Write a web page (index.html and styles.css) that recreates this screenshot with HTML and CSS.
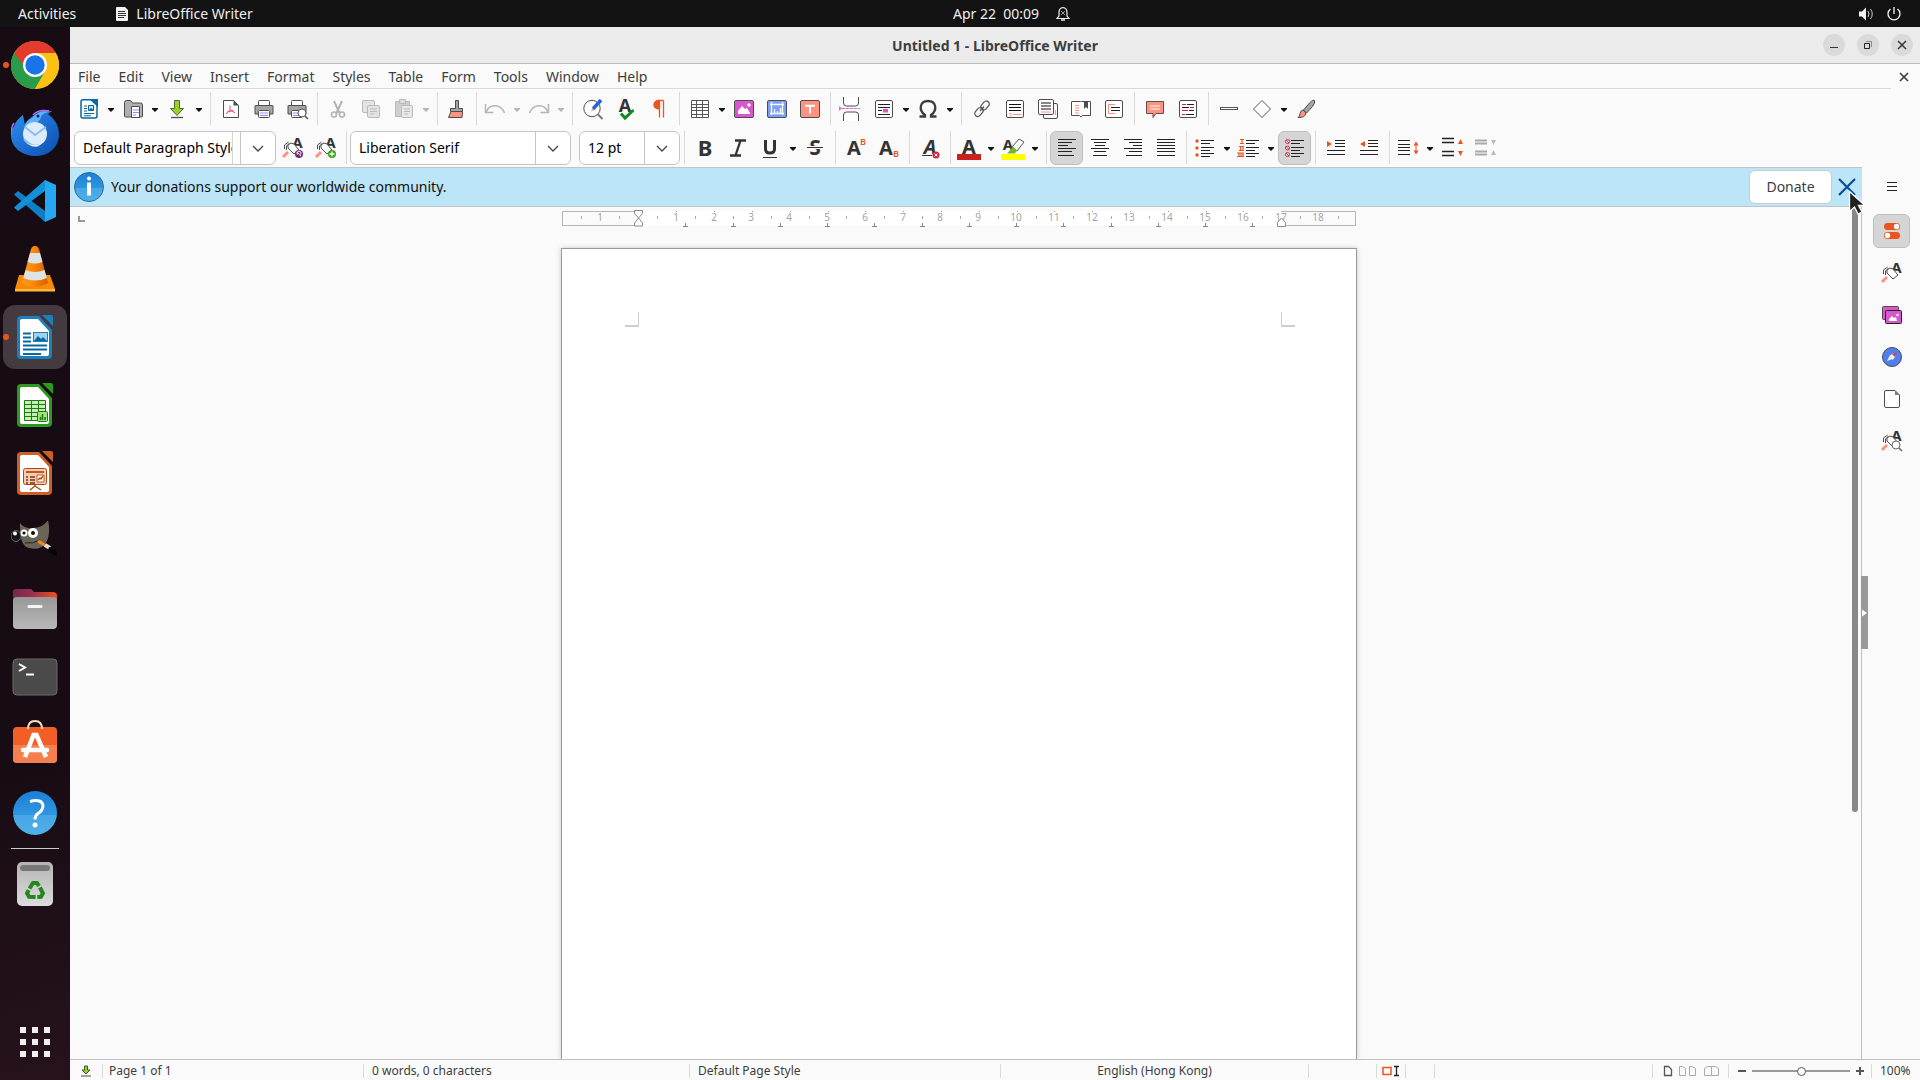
FILE: index.html
```html
<!DOCTYPE html>
<html lang="en">
<head>
<meta charset="utf-8">
<title>Untitled 1 - LibreOffice Writer</title>
<link rel="stylesheet" href="styles.css">
</head>
<body>
<svg class="defs" width="0" height="0" aria-hidden="true">
  <defs>
    <linearGradient id="g-blue" x1="0" y1="0" x2="0" y2="1"><stop offset="0" stop-color="#1b7fd6"/><stop offset=".54" stop-color="#2e96e0"/><stop offset=".55" stop-color="#46a6e6"/><stop offset="1" stop-color="#4eb0ea"/></linearGradient>
    <linearGradient id="g-cone" x1="0" y1="0" x2="1" y2="0"><stop offset="0" stop-color="#f99a1c"/><stop offset=".4" stop-color="#ff8a0c"/><stop offset="1" stop-color="#d85c00"/></linearGradient>
    <linearGradient id="g-folder" x1="0" y1="0" x2="1" y2="0"><stop offset="0" stop-color="#77284f"/><stop offset=".45" stop-color="#9b3050"/><stop offset="1" stop-color="#f0501c"/></linearGradient>
    <linearGradient id="g-grey" x1="0" y1="0" x2="0" y2="1"><stop offset="0" stop-color="#989898"/><stop offset="1" stop-color="#b8b8b8"/></linearGradient>
    <linearGradient id="g-bin" x1="0" y1="0" x2="0" y2="1"><stop offset="0" stop-color="#b4b4b4"/><stop offset="1" stop-color="#dcdcdc"/></linearGradient>
    <linearGradient id="g-bird" x1="0" y1="0" x2="1" y2="1"><stop offset="0" stop-color="#2f8ff5"/><stop offset="1" stop-color="#0b4fae"/></linearGradient>
  </defs>
</svg>
<svg class="symbols" aria-hidden="true">
  <symbol id="i-caret" viewBox="0 0 8 24"><path d="M1 11h6v1l-3 3-3-3z" fill="currentColor"/></symbol>
  <symbol id="i-chev" viewBox="0 0 12 12"><path d="M1 4l5 5 5-5" fill="none" stroke="#444" stroke-width="1.3"/></symbol>
  <symbol id="i-new" viewBox="0 0 24 24"><path d="M6 2.700h9l5 5V19q0 2-2 2H6q-2 0-2-2V4.700q0-2 2-2z" fill="#fff" stroke="#0369a3" stroke-width="1.500"/><path d="M12 2h9v8z" fill="#0369a3"/><path d="M7 9h3M7 11.500h3M7 14h3M7 16.500h10M7 18.800h7" stroke="#0369a3"/><path d="M11.500 8.500h5v5h-5z" fill="#bde3f5" stroke="#0369a3"/><path d="M12 13l2-2 3 2.500z" fill="#0369a3"/></symbol>
  <symbol id="i-open" viewBox="0 0 24 24"><path d="M3.500 19V5.500q0-2 2-2h4l2 2.500h8q2 0 2 2V19q0 1-1 1h-16q-1 0-1-1z" fill="#b0b0b0" stroke="#4d4d4d"/><path d="M10.500 9.500h8v11h-8z" fill="#fff" stroke="#4d4d4d"/><path d="M12 13h6M12 15.500h6M12 18h3" stroke="#8d8df0"/></symbol>
  <symbol id="i-save" viewBox="0 0 24 24"><path d="M9.500 3.500h5v8h4L12 18.500 5.500 11.500h4z" fill="#9acd32" stroke="#4d6a2a"/><path d="M6 20.500h12" stroke="#4d4d4d" stroke-width="1.300"/></symbol>
  <symbol id="i-pdf" viewBox="0 0 24 24"><path d="M4.500 3.500h10l5 5v12h-15z" fill="#fff" stroke="#4d4d4d" stroke-linejoin="round"/><path d="M14.500 3v5.500H20z" fill="#4d4d4d"/><path d="M11 8.500v4l5 3.500M11 12.500L7 17M8.500 15l6-1.500" stroke="#e8486e" fill="none"/></symbol>
  <symbol id="i-print" viewBox="0 0 24 24"><rect x="6.500" y="3.500" width="11" height="6" rx="1" fill="#fff" stroke="#4d4d4d"/><path d="M3.500 8.500h17q.500 0 .500.500v8H3V9q0-.5.5-.5z" fill="#a5a5a5" stroke="#4d4d4d"/><rect x="6.500" y="13.500" width="11" height="7" rx="1" fill="#fff" stroke="#4d4d4d"/><path d="M8 16h8M8 18.500h8" stroke="#8d8df0"/></symbol>
  <symbol id="i-cut" viewBox="0 0 24 24" stroke="#b3b3b3" fill="none"><path d="M8 4l5.500 12M16 4l-5.500 12" stroke-width="2"/><circle cx="8" cy="17.500" r="2.500" stroke-width="1.600"/><circle cx="16" cy="17.500" r="2.500" stroke-width="1.600"/></symbol>
  <symbol id="i-copy" viewBox="0 0 24 24" stroke="#b9b9b9" fill="#e3e3e3"><rect x="3.500" y="3.500" width="12" height="12" rx="1.500"/><rect x="8.500" y="8.500" width="12" height="12" rx="1.500"/><path d="M11 12h7M11 14.500h7M11 17h4"/></symbol>
  <symbol id="i-paste" viewBox="0 0 24 24" stroke="#b9b9b9"><path d="M3.500 4.500h14v15h-14z" fill="#cfcfcf"/><path d="M7.500 2.500h6v4h-6z" fill="#ddd"/><rect x="9.500" y="8.500" width="11" height="12" rx="1" fill="#e8e8e8"/><path d="M12 12h6M12 14.500h6M12 17h4"/></symbol>
  <symbol id="i-clone" viewBox="0 0 24 24"><path d="M11.500 3.500h3v8h4v3h-12v-3h5z" fill="#a5a5a5" stroke="#4d4d4d"/><path d="M7 14.500h11.500l-.5 6H4.500z" fill="#ff9280" stroke="#4d4d4d"/></symbol>
  <symbol id="i-undo" viewBox="0 0 24 24"><path d="M2.500 7v8.500h8M3.500 14.500C7 6 18 7 21.500 16" fill="none" stroke="#b5b5b5" stroke-width="1.500"/></symbol>
  <symbol id="i-find" viewBox="0 0 24 24"><circle cx="11" cy="11.500" r="8.200" fill="#fff" stroke="#4d4d4d"/><path d="M16.500 17l5 5" stroke="#777" stroke-width="2"/><path d="M12 12l8-9" stroke="#2a62de" stroke-width="3.500"/><path d="M10 14.500l1.200-3 2 1.800z" fill="#f5a76c"/></symbol>
  <symbol id="i-spell" viewBox="0 0 24 24"><text x="11" y="15" text-anchor="middle" class="glyph" font-size="18">A</text><path d="M7 16.500l4 4.500 8.500-8" stroke="#128a1f" stroke-width="3" fill="none"/></symbol>
  <symbol id="i-pil" viewBox="0 0 24 24"><path d="M16.500 3.500H11M12.500 3.500v17M16.500 3.500v17" fill="none" stroke="#e95420" stroke-width="1.300"/><path d="M12.500 3H11a4.700 4.700 0 0 0 0 9.400h1.500z" fill="#e95420"/></symbol>
  <symbol id="i-table" viewBox="0 0 24 24"><path d="M3.500 3.500h17v17h-17zM3.500 7.500h17M3.500 10.500h17M3.500 13.500h17M3.500 17.500h17M8.500 3.500v17M14.500 3.500v17" fill="#fff" stroke="#555"/></symbol>
  <symbol id="i-image" viewBox="0 0 24 24"><rect x="2.500" y="3.500" width="19" height="17" rx="1.500" fill="#d957cc" stroke="#4d4d4d"/><path d="M6 17v-3l4-5 3 3 2-1 3 5v1z" fill="#fff"/><circle cx="17" cy="8" r="1.700" fill="#fff"/></symbol>
  <symbol id="i-chart" viewBox="0 0 24 24"><rect x="2.500" y="3.500" width="19" height="17" rx="1.500" fill="#7ba0f8" stroke="#4d4d4d"/><path d="M6.500 5v13M17.500 5v13M5 7.500h14M5 16.500h14M9.500 12v5M12.500 14v3M15.500 11v6" stroke="#fff" stroke-width="1.300"/></symbol>
  <symbol id="i-tbox" viewBox="0 0 24 24"><rect x="2.500" y="3.500" width="19" height="17" rx="1.500" fill="#ff9280" stroke="#4d4d4d"/><path d="M7 8.800h10M12 8v8.500" stroke="#fff" stroke-width="2"/></symbol>
  <symbol id="i-break" viewBox="0 0 24 24"><path d="M4.500 0v6q0 3 3 3h9q3 0 3-3V0M4.500 24v-6q0-3 3-3h9q3 0 3 3v6" fill="#fff" stroke="#4d4d4d"/><path d="M3 11.500h18" stroke="#e26bd0" stroke-dasharray="3 1"/><path d="M0 9l3 2.500L0 14z" fill="#e26bd0"/></symbol>
  <symbol id="i-field" viewBox="0 0 24 24"><rect x="3.500" y="3.500" width="17" height="17" rx="1.500" fill="#fff" stroke="#4d4d4d"/><path d="M6 7.500h12M6 10.500h12M6 13.500h4M6 17.500h12" stroke="#222"/><path d="M11 12h5v3.500h-5z" fill="#d957cc"/></symbol>
  <symbol id="i-omega" viewBox="0 0 24 24"><path d="M3.500 19.500h5.500v-1.500C2 13 4 4 12 4s10 9 3 14v1.500h5.500" fill="none" stroke="#3d3d3d" stroke-width="2.300"/></symbol>
  <symbol id="i-link" viewBox="0 0 24 24" fill="none" stroke="#555" stroke-width="1.200"><rect x="-5" y="-3" width="10" height="6" rx="3" transform="translate(15 8.500) rotate(-50)"/><rect x="-5" y="-3" width="10" height="6" rx="3" transform="translate(9 15) rotate(-50)"/><path d="M10 14l4-4.500"/></symbol>
  <symbol id="i-foot" viewBox="0 0 24 24"><rect x="3.500" y="3.500" width="17" height="17" rx="1.500" fill="#fff" stroke="#4d4d4d"/><path d="M6 7.500h12M6 10.500h12M6 13.500h12" stroke="#111" stroke-width="1.200"/><path d="M6 16.500h2v3M10 17.500h8" stroke="#ff9280" fill="none"/></symbol>
  <symbol id="i-end" viewBox="0 0 24 24"><rect x="7.500" y="6.500" width="14" height="15" rx="1.500" fill="#fff" stroke="#4d4d4d"/><path d="M19.500 13v5" stroke="#ff9280"/><rect x="2.500" y="2.500" width="15" height="15" rx="1.500" fill="#fff" stroke="#4d4d4d"/><path d="M5 6h10M5 9h10M5 12h10" stroke="#111"/><path d="M5 15h10" stroke="#ff9280"/></symbol>
  <symbol id="i-book" viewBox="0 0 24 24"><path d="M3 4.500h8.500l.5.500.5-.5H21q.5 0 .5.500v13.500H13.500L12 20l-1.500-1.500h-8V5q0-.5.5-.5z" fill="#fff" stroke="#4d4d4d"/><path d="M15 4h4v8l-2-2-2 2z" fill="#4d4d4d"/><path d="M6 8.500h4M6 11h4M6 13.500h4M6 16h4" stroke="#ff9280" stroke-width="1.200"/></symbol>
  <symbol id="i-xref" viewBox="0 0 24 24"><rect x="3.500" y="3.500" width="17" height="17" rx="1.500" fill="#fff" stroke="#4d4d4d"/><path d="M13 7.500H6.500v9H13" stroke="#ff9280" fill="none"/><path d="M9 10.500h9M9 13.500h9" stroke="#222"/></symbol>
  <symbol id="i-comment" viewBox="0 0 24 24"><path d="M3.500 4.500h17v12H13l-3 4v-4H3.500z" fill="#ff9280" stroke="#6d4a45"/><path d="M7 9h10M7 12h10" stroke="#fff"/></symbol>
  <symbol id="i-track" viewBox="0 0 24 24"><rect x="3.500" y="3.500" width="17" height="17" rx="1.500" fill="#fff" stroke="#4d4d4d"/><path d="M6 7.500h4M14 10.500h4M6 13.500h6M6 17.500h3" stroke="#d4213d"/><path d="M11 7.500h7M6 10.500h7M13 13.500h5M10 17.500h8" stroke="#222"/></symbol>
  <symbol id="i-line" viewBox="0 0 24 24"><rect x="3.500" y="10.500" width="17" height="2" fill="#fff" stroke="#555"/></symbol>
  <symbol id="i-diamond" viewBox="0 0 24 24"><path d="M12 3.500l8.500 8.500-8.500 8.500L3.500 12z" fill="#fff" stroke="#555"/></symbol>
  <symbol id="i-brush" viewBox="0 0 24 24"><path d="M20.500 3.500q1 2-2 6l-6 6.500-3-3L15.500 6q4-4 5-2.500z" fill="#a5a5a5" stroke="#4d4d4d"/><path d="M9 13l3 3q-1 5-8 4.500 2-1 2-4 .5-3 3-3.500z" fill="#ff9280" stroke="#4d4d4d"/></symbol>
  <symbol id="i-styleA" viewBox="0 0 24 24"><text x="16.500" y="12" text-anchor="middle" class="glyph" font-size="15">A</text><path d="M2 21l5-5" stroke="#ff9280" stroke-width="3"/><path d="M7 9l3-2 3 1 5 6-5 4-6-6z" fill="#fff" stroke="#4d4d4d"/><path d="M3.500 13V9l4-3M5.500 14v-4l3-3" stroke="#4d4d4d" fill="none"/></symbol>
  <symbol id="i-bul" viewBox="0 0 24 24"><path d="M8 4.500h13M8 7.500h9M8 11.500h13M8 14.500h9M8 17.500h13M8 20.500h9" stroke="#222"/></symbol>
  <symbol id="i-app-doc" viewBox="0 0 40 48"><path d="M6 3h18l13 14v25q0 4-4 4H6q-4 0-4-4V7q0-4 4-4z" fill="currentColor"/><path d="M7 6h16l11 12v23q0 2-2 2H7q-2 0-2-2V8q0-2 2-2z" fill="#fff"/><path d="M27 2h9q2 0 2 2v9z" fill="currentColor"/></symbol>
</svg>

<div class="desktop">
  <header class="topbar">
    <div class="top-left">
      <button class="top-item">Activities</button>
      <button class="top-item app"><svg width="12" height="14" viewBox="0 0 12 14"><path d="M1 0h8l3 3v10q0 1-1 1H1q-1 0-1-1V1q0-1 1-1z" fill="#f2f2f2"/><path d="M2 4.500h7M2 6.500h8M2 8.500h8M2 10.500h6" stroke="#333"/></svg>LibreOffice Writer</button>
    </div>
    <button class="top-item clock">Apr 22&nbsp; 00:09<svg width="16" height="16" viewBox="0 0 16 16"><path d="M8 1.500q4 .5 4 5V10l2 2.500H2L4 10V6.500q0-4.500 4-5z" fill="none" stroke="#eee" stroke-width="1.200"/><path d="M6 14h4" stroke="#eee" stroke-width="1.500"/><path d="M6 5l4 4M10 5L6 9" stroke="#999"/></svg></button>
    <button class="top-item tray" aria-label="System"><svg width="16" height="16" viewBox="0 0 16 16"><path d="M1 5.500h3L8 1.500v13L4 10.500H1z" fill="#f2f2f2"/><path d="M10 5q2 3 0 6M12.500 3q3.500 5 0 10" stroke="#ccc" fill="none"/></svg><svg width="16" height="16" viewBox="0 0 16 16"><path d="M4.500 3a6 6 0 1 0 7 0M8 1v7" stroke="#f2f2f2" stroke-width="1.300" fill="none"/></svg></button>
  </header>

  <nav class="dock" aria-label="Dock">
    <button class="dock-item running" aria-label="Chrome"><svg width="48" height="48" viewBox="0 0 48 48"><circle cx="24" cy="24" r="24" fill="#fbbc04"/><path d="M24 24L3.200 12a24 24 0 0 1 41.600 0z" fill="#e33b2e"/><path d="M3.200 12A24 24 0 0 0 24 48l10.400-18L24 24z" fill="#2a9b48"/><path d="M24 12h20.800A24 24 0 0 1 24 48l10.400-18z" fill="#fcc115"/><path d="M3.200 12L13.600 30l10.400-6-2-10z" fill="#2a9b48"/><path d="M3.200 12H24l-10 14z" fill="#e33b2e"/><circle cx="24" cy="24" r="12" fill="#fff"/><circle cx="24" cy="24" r="9.700" fill="#1a73e8"/></svg></button>
    <button class="dock-item" aria-label="Thunderbird"><svg width="48" height="48" viewBox="0 0 48 48"><path d="M24 6q5-6 17-4l-4 3q11 8 11 20c0 13-10 22-23 22S0 39 0 26q0-6 3-9 3-7 9-11l2 10q2-6 10-10z" fill="url(#g-bird)"/><path d="M21 9q7-9 17-6-7 1-8 5-1 5-8 7-6 3-7 8-5-8 6-14z" fill="#5fb0fa"/><path d="M22 6q5-6 16-4M3 14q-3 4-3 12" stroke="#b06af0" fill="none" stroke-width="1.500"/><circle cx="24" cy="25" r="12" fill="#dcecfb"/><path d="M14 18l10 8 11-8M13 30q8 9 15 6" stroke="#8fbdf0" fill="none" stroke-width="2"/><path d="M12 32q8 6 18 3-6 6-18-3z" fill="#eef6ff"/><circle cx="27" cy="7" r="1.500" fill="#06224f"/></svg></button>
    <button class="dock-item" aria-label="Visual Studio Code"><svg width="42" height="42" viewBox="0 0 42 42"><path d="M0 14.500l4-3.500L35 34l-4 8z" fill="#0e7fc4"/><path d="M0 27.500l4 3.500L35 8 31 0z" fill="#1391d8"/><path d="M31 0l11 5v32l-11 5z" fill="#25a7f2"/></svg></button>
    <button class="dock-item" aria-label="VLC"><svg width="42" height="48" viewBox="0 0 42 48"><path d="M5 30h31l5 14v2H1v-2z" fill="#f88a08"/><path d="M1 44h40v2.500H1z" fill="#ffb83a"/><path d="M21 1q3 0 4 3l9 34q-13 8-26 0l9-34q1-3 4-3z" fill="url(#g-cone)"/><path d="M16 8h10l2.500 9q-7.500 3-15 0zM11.500 25q9 4 19 0l2.300 8q-11.500 5-23.500 0z" fill="#dce3e3"/></svg></button>
    <button class="dock-item running active" aria-label="LibreOffice Writer"><svg class="c-writer" width="40" height="48" viewBox="0 0 40 48"><use href="#i-app-doc"/><path d="M8 20.500h8M8 24.500h8M8 28.500h8M8 32.500h24M8 36.500h24M8 41h18" stroke="#0369a3" stroke-width="2"/><rect x="18.500" y="19.500" width="14" height="9" fill="#9fd3ef" stroke="#1b7fc0"/><path d="M19 28l4-5 3 3 2-2 4 4z" fill="#0369a3"/></svg></button>
    <button class="dock-item" aria-label="LibreOffice Calc"><svg class="c-calc" width="40" height="48" viewBox="0 0 40 48"><use href="#i-app-doc"/><path d="M9.500 19.500h21v20h-21zM9.500 23.500h21M9.500 27.500h21M9.500 31.500h21M9.500 35.500h21M16.500 19.500v20M23.500 19.500v20" fill="#c5efb5" stroke="#1d7a12"/><rect x="22.500" y="30.500" width="10" height="10" rx="1" fill="#9de27c" stroke="#1d7a12"/><path d="M25.500 39v-3M27.500 39v-6M30 39v-3" stroke="#1d7a12" stroke-width="1.500"/></svg></button>
    <button class="dock-item" aria-label="LibreOffice Impress"><svg class="c-impress" width="40" height="48" viewBox="0 0 40 48"><use href="#i-app-doc"/><rect x="8.500" y="19.500" width="23" height="16" rx="2" fill="#f6cdb4" stroke="#a84a16"/><path d="M11 23h18" stroke="#c4561c" stroke-width="2"/><path d="M11 28h2M11 31h2M11 34h2M15 28h5M15 31h5M15 34h5" stroke="#7a3208" stroke-width="1.700"/><path d="M22 26h7v7h-7z" fill="#fff" stroke="#c4561c"/><path d="M23 31l2-2 1 1 2-3M20 35v2l-5 4M20 37l6 4" stroke="#a84a16" fill="none" stroke-width="1.400"/></svg></button>
    <button class="dock-item" aria-label="GIMP"><svg width="48" height="40" viewBox="0 2 48 40"><path d="M9 4q4 6 13 5 10 0 15-8 3 14-2 23-6 8-17 5Q8 27 9 4z" fill="#6b6557"/><ellipse cx="5" cy="17" rx="5" ry="5.500" fill="#151515" stroke="#5a6670"/><circle cx="4" cy="14.500" r="2" fill="#fff"/><circle cx="13" cy="14" r="3.500" fill="#fff"/><circle cx="22" cy="14" r="5" fill="#fff"/><circle cx="13" cy="14" r="1.600" fill="#111"/><circle cx="22" cy="14" r="2" fill="#111"/><path d="M14 24q8 1 15-3" stroke="#222" fill="none"/><path d="M27 22l8 5" stroke="#f08a1c" stroke-width="3"/><path d="M34 26l5 3" stroke="#ddd" stroke-width="4"/><path d="M38 28q9 1 8 9-6-2-9-6z" fill="#050505"/></svg></button>
    <button class="dock-item" aria-label="Files"><svg width="46" height="42" viewBox="0 0 46 42"><path d="M1 14V4q0-3 3-3h14q2 0 3 2l1 1h19q4 0 4 4v8z" fill="url(#g-folder)"/><rect x="1" y="9" width="44" height="32" rx="4" fill="url(#g-grey)"/><path d="M17 18.500h12" stroke="#f5f5f5" stroke-width="3" stroke-linecap="round"/></svg></button>
    <button class="dock-item" aria-label="Terminal"><svg width="46" height="38" viewBox="0 0 46 38"><rect x="1" y="1" width="44" height="36" rx="4" fill="#4a4a4a" stroke="#6b6b6b"/><path d="M7 6l6 3.500L7 13M14 16.500h8" fill="none" stroke="#fff" stroke-width="2"/></svg></button>
    <button class="dock-item" aria-label="Software"><svg width="46" height="50" viewBox="0 0 46 50"><rect x="1" y="7" width="44" height="36" rx="4" fill="#f15f27"/><path d="M1 25h44v14q0 4-4 4H5q-4 0-4-4z" fill="#f5804f"/><path d="M16 9q0-8 7-8t7 8" stroke="#f7e0b8" stroke-width="2" fill="none"/><path d="M13 37l8.500-22h3L34 37" fill="none" stroke="#fff" stroke-width="4.500"/><path d="M11 30h24" stroke="#fff" stroke-width="4.500" stroke-linecap="round"/></svg></button>
    <button class="dock-item" aria-label="Help"><svg width="46" height="46" viewBox="0 0 46 46"><circle cx="23" cy="23" r="22" fill="url(#g-blue)"/><path d="M18 11.500q12-3 13 4 0 5-5 8-3 2-3 6" fill="none" stroke="#fff" stroke-width="3"/><circle cx="23" cy="35" r="2.500" fill="#fff"/></svg></button>
    <hr class="dock-line">
    <button class="dock-item" aria-label="Rubbish bin"><svg width="38" height="46" viewBox="0 0 38 46"><rect x="1" y="1" width="36" height="44" rx="5" fill="url(#g-bin)"/><rect x="4" y="4" width="30" height="6" rx="3" fill="#777"/><g transform="translate(19 30)" fill="none" stroke="#22861b" stroke-width="4"><path d="M-5.500-2.500l3.500-5.500h4l2 3"/><path d="M-5.500-2.500l3.500-5.500h4l2 3" transform="rotate(120)"/><path d="M-5.500-2.500l3.500-5.500h4l2 3" transform="rotate(240)"/></g></svg></button>
    <button class="dock-item apps" aria-label="Show applications"><svg width="30" height="30" viewBox="0 0 30 30" fill="#f0f0ee"><path d="M0 0h6v6H0zM12 0h6v6h-6zM24 0h6v6h-6zM0 12h6v6H0zM12 12h6v6h-6zM24 12h6v6h-6zM0 24h6v6H0zM12 24h6v6h-6zM24 24h6v6h-6z"/></svg></button>
  </nav>

  <main class="window">
    <div class="titlebar">
      <h1>Untitled 1 - LibreOffice Writer</h1>
      <div class="win-buttons">
        <button aria-label="Minimise"><svg width="22" height="22"><path d="M7 13.500h8" stroke="#333"/></svg></button>
        <button aria-label="Restore"><svg width="22" height="22"><path d="M7.500 9.500h5v5h-5z" fill="none" stroke="#222"/><path d="M9 7.500h5.500V13" fill="none" stroke="#888"/></svg></button>
        <button aria-label="Close"><svg width="22" height="22"><path d="M7 7l8 8M15 7l-8 8" stroke="#333" stroke-width="1.500"/></svg></button>
      </div>
    </div>

    <div class="menubar">
      <nav class="menus">
        <button>File</button><button>Edit</button><button>View</button><button>Insert</button><button>Format</button><button>Styles</button><button>Table</button><button>Form</button><button>Tools</button><button>Window</button><button>Help</button>
      </nav>
      <button class="doc-close" aria-label="Close document"><svg width="10" height="10"><path d="M1 1l8 8M9 1L1 9" stroke="#333" stroke-width="1.500"/></svg></button>
    </div>

    <div class="toolbar standard">
      <div class="group">
        <button aria-label="New"><svg><use href="#i-new"/></svg></button><button class="arr" aria-label="New options"><svg><use href="#i-caret"/></svg></button>
        <button aria-label="Open"><svg><use href="#i-open"/></svg></button><button class="arr" aria-label="Open options"><svg><use href="#i-caret"/></svg></button>
        <button aria-label="Save"><svg><use href="#i-save"/></svg></button><button class="arr" aria-label="Save options"><svg><use href="#i-caret"/></svg></button>
      </div>
      <div class="group">
        <button aria-label="Export as PDF"><svg><use href="#i-pdf"/></svg></button>
        <button aria-label="Print"><svg><use href="#i-print"/></svg></button>
        <button aria-label="Print preview"><svg viewBox="0 0 24 24"><use href="#i-print"/><circle cx="17" cy="16" r="4" fill="#fff" stroke="#555"/><path d="M20 19l3 3" stroke="#555" stroke-width="1.500"/></svg></button>
      </div>
      <div class="group">
        <button disabled aria-label="Cut"><svg><use href="#i-cut"/></svg></button>
        <button disabled aria-label="Copy"><svg><use href="#i-copy"/></svg></button>
        <button disabled aria-label="Paste"><svg><use href="#i-paste"/></svg></button><button class="arr" disabled aria-label="Paste options"><svg><use href="#i-caret"/></svg></button>
      </div>
      <div class="group split"><button aria-label="Clone formatting"><svg><use href="#i-clone"/></svg></button></div>
      <div class="group split">
        <button disabled aria-label="Undo"><svg><use href="#i-undo"/></svg></button><button class="arr" disabled aria-label="Undo list"><svg><use href="#i-caret"/></svg></button>
        <button disabled aria-label="Redo"><svg class="flip"><use href="#i-undo"/></svg></button><button class="arr" disabled aria-label="Redo list"><svg><use href="#i-caret"/></svg></button>
      </div>
      <div class="group">
        <button aria-label="Find and replace"><svg><use href="#i-find"/></svg></button>
        <button aria-label="Spelling"><svg><use href="#i-spell"/></svg></button>
        <button aria-label="Formatting marks"><svg><use href="#i-pil"/></svg></button>
      </div>
      <div class="group">
        <button aria-label="Insert table"><svg><use href="#i-table"/></svg></button><button class="arr" aria-label="Table size"><svg><use href="#i-caret"/></svg></button>
        <button aria-label="Insert image"><svg><use href="#i-image"/></svg></button>
        <button aria-label="Insert chart"><svg><use href="#i-chart"/></svg></button>
        <button aria-label="Insert text box"><svg><use href="#i-tbox"/></svg></button>
      </div>
      <div class="group">
        <button aria-label="Insert page break"><svg><use href="#i-break"/></svg></button>
        <button aria-label="Insert field"><svg><use href="#i-field"/></svg></button><button class="arr" aria-label="Field options"><svg><use href="#i-caret"/></svg></button>
        <button aria-label="Insert special character"><svg><use href="#i-omega"/></svg></button><button class="arr" aria-label="Character options"><svg><use href="#i-caret"/></svg></button>
      </div>
      <div class="group">
        <button aria-label="Insert hyperlink"><svg><use href="#i-link"/></svg></button>
        <button aria-label="Insert footnote"><svg><use href="#i-foot"/></svg></button>
        <button aria-label="Insert endnote"><svg><use href="#i-end"/></svg></button>
        <button aria-label="Insert bookmark"><svg><use href="#i-book"/></svg></button>
        <button aria-label="Insert cross-reference"><svg><use href="#i-xref"/></svg></button>
      </div>
      <div class="group">
        <button aria-label="Insert comment"><svg><use href="#i-comment"/></svg></button>
        <button aria-label="Track changes"><svg><use href="#i-track"/></svg></button>
      </div>
      <div class="group">
        <button aria-label="Insert line"><svg><use href="#i-line"/></svg></button>
        <button aria-label="Basic shapes"><svg><use href="#i-diamond"/></svg></button><button class="arr" aria-label="Shape options"><svg><use href="#i-caret"/></svg></button>
        <button aria-label="Show draw functions"><svg><use href="#i-brush"/></svg></button>
      </div>
    </div>

    <div class="toolbar formatting">
      <div class="combo style-box"><input type="text" value="Default Paragraph Style" aria-label="Paragraph style"><span class="slot"></span><button aria-label="Style list"><svg width="12" height="12"><use href="#i-chev"/></svg></button></div>
      <div class="group flush">
        <button aria-label="Update style"><svg viewBox="0 0 24 24"><use href="#i-styleA"/><circle cx="18" cy="18" r="4" fill="#7a2a7a"/><path d="M16 16l4 4M16.500 18.500a2 2 0 1 1 3 0" stroke="#fff" fill="none"/></svg></button>
        <button aria-label="New style"><svg viewBox="0 0 24 24"><use href="#i-styleA"/><circle cx="18" cy="18" r="4" fill="#3fa21f"/><path d="M18 15.500v5M15.500 18h5" stroke="#fff" stroke-width="1.300"/></svg></button>
      </div>
      <div class="combo font-box"><input type="text" value="Liberation Serif" aria-label="Font name"><button aria-label="Font list"><svg width="12" height="12"><use href="#i-chev"/></svg></button></div>
      <div class="combo size-box"><input type="text" value="12 pt" aria-label="Font size"><button aria-label="Size list"><svg width="12" height="12"><use href="#i-chev"/></svg></button></div>
      <div class="group lead">
        <button aria-label="Bold"><svg viewBox="0 0 24 24"><text x="12" y="20" text-anchor="middle" class="glyph" font-size="22">B</text></svg></button>
        <button aria-label="Italic"><svg viewBox="0 0 24 24"><path d="M9 4.500h11M4 19.500h11M14.500 4.500l-5 15" stroke="#333" stroke-width="2.300"/></svg></button>
        <button aria-label="Underline"><svg viewBox="0 0 24 24"><path d="M6.500 4v9q0 4 4.500 4t4.500-4V4" stroke="#333" stroke-width="3" fill="none"/><path d="M4 21.500h14" stroke="#333"/></svg></button><button class="arr" aria-label="Underline options"><svg><use href="#i-caret"/></svg></button>
        <button aria-label="Strikethrough"><svg viewBox="0 0 24 24"><text x="12" y="19" text-anchor="middle" class="glyph" font-size="21">S</text><path d="M3 11.500h18" stroke="#fafafa" stroke-width="3"/><path d="M4 11.500h16" stroke="#333"/></svg></button>
      </div>
      <div class="group">
        <button aria-label="Superscript"><svg viewBox="0 0 24 24"><text x="10" y="19" text-anchor="middle" class="glyph" font-size="20">A</text><text x="19" y="9" text-anchor="middle" class="mini" font-size="9">B</text></svg></button>
        <button aria-label="Subscript"><svg viewBox="0 0 24 24"><text x="9" y="19" text-anchor="middle" class="glyph" font-size="20">A</text><text x="19" y="21" text-anchor="middle" class="mini" font-size="9">B</text></svg></button>
      </div>
      <div class="group">
        <button aria-label="Clear formatting"><svg viewBox="0 0 24 24"><text x="12" y="18" text-anchor="middle" class="glyph slant" font-size="20">A</text><path d="M4 19.500h10" stroke="#333"/><circle cx="18" cy="19" r="3.500" fill="#d4213d"/><path d="M16.500 17.500l3 3M19.500 17.500l-3 3" stroke="#fff"/></svg></button>
      </div>
      <div class="group split">
        <button aria-label="Font colour"><svg viewBox="0 0 24 24"><text x="12" y="18" text-anchor="middle" class="glyph" font-size="20">A</text><path d="M0 18h24v6H0z" fill="#c9211e"/></svg></button><button class="arr" aria-label="Colour options"><svg><use href="#i-caret"/></svg></button>
        <button aria-label="Highlighting"><svg viewBox="0 0 24 24"><text x="7" y="14" text-anchor="middle" class="glyph" font-size="15">A</text><path d="M11 11l7-8 5 3-7 9z" fill="#fff" stroke="#555"/><path d="M6 17.500l6-7 4 4-2 3z" fill="#74b82a"/><path d="M0 18h24v6H0z" fill="#ff0"/></svg></button><button class="arr" aria-label="Highlight options"><svg><use href="#i-caret"/></svg></button>
      </div>
      <div class="group">
        <button class="on" aria-label="Align left"><svg viewBox="0 0 24 24"><path d="M3 3.500h18M3 6.500h14M3 9.500h10M3 12.500h18M3 15.500h14M3 19.500h16" stroke="#222"/></svg></button>
        <button aria-label="Centre"><svg viewBox="0 0 24 24"><path d="M3 3.500h18M6 6.500h12M7 9.500h10M3 12.500h18M6 15.500h12M5 19.500h14" stroke="#222"/></svg></button>
        <button aria-label="Align right"><svg viewBox="0 0 24 24"><path d="M3 3.500h18M8 6.500h13M12 9.500h9M3 12.500h18M8 15.500h13M5 19.500h16" stroke="#222"/></svg></button>
        <button aria-label="Justify"><svg viewBox="0 0 24 24"><path d="M3 3.500h18M3 6.500h18M3 9.500h18M3 12.500h18M3 15.500h18M3 19.500h18" stroke="#222"/></svg></button>
      </div>
      <div class="group split">
        <button aria-label="Bullets"><svg viewBox="0 0 24 24"><use href="#i-bul"/><g fill="#e95420"><circle cx="4" cy="5" r="1.700"/><circle cx="4" cy="12" r="1.700"/><circle cx="4" cy="19" r="1.700"/></g></svg></button><button class="arr" aria-label="Bullet options"><svg><use href="#i-caret"/></svg></button>
        <button aria-label="Numbering"><svg viewBox="0 0 24 24"><use href="#i-bul" x="1"/><path d="M3 3.500h4M5 3.500v4M3 7.500h4M2 10.500h5M2 14.500h5M3.500 10v4M6 10v4M0 17h7M0 20.500h7M2 17v4M4 17v4M6 17v4" stroke="#e95420" stroke-width="1.200"/></svg></button><button class="arr" aria-label="Number options"><svg><use href="#i-caret"/></svg></button>
        <button class="on" aria-label="No list"><svg viewBox="0 0 24 24"><use href="#i-bul"/><g fill="#fff" stroke="#c4213d"><circle cx="4.500" cy="5.500" r="2"/><circle cx="4.500" cy="12" r="2"/><circle cx="4.500" cy="18.500" r="2"/><path d="M3 4l3 3M3 10.500l3 3M3 17l3 3"/></g></svg></button>
      </div>
      <div class="group">
        <button aria-label="Increase indent"><svg viewBox="0 0 24 24"><path d="M11 4.500h10M11 7.500h10M11 10.500h10M3 14.500h18M3 18.500h18" stroke="#222" stroke-width="1.200"/><path d="M3 5l5 3-5 3z" fill="#e95420"/></svg></button>
        <button aria-label="Decrease indent"><svg viewBox="0 0 24 24"><path d="M11 4.500h10M11 7.500h10M11 10.500h10M3 14.500h18M3 18.500h18" stroke="#222" stroke-width="1.200"/><path d="M8 5L3 8l5 3z" fill="#e95420"/></svg></button>
      </div>
      <div class="group split">
        <button aria-label="Line spacing"><svg viewBox="0 0 24 24"><path d="M2 4.500h12M2 8.500h12M2 11.500h12M2 14.500h12M2 18.500h12" stroke="#222" stroke-width="1.200"/><path d="M20 8v8" stroke="#e95420"/><path d="M17.500 9.500l2.500-4 2.500 4zM17.500 14.500l2.500 4 2.500-4z" fill="#e95420"/></svg></button><button class="arr" aria-label="Spacing options"><svg><use href="#i-caret"/></svg></button>
        <button aria-label="Increase paragraph spacing"><svg viewBox="0 0 24 24"><path d="M2 2.500h12M2 6.500h12M2 15.500h12M2 19.500h12" stroke="#222" stroke-width="1.300"/><path d="M18 8l2.500-5L23 8zM18 15l2.500 5 2.500-5z" fill="#e95420"/></svg></button>
        <button disabled aria-label="Decrease paragraph spacing"><svg viewBox="0 0 24 24"><path d="M2 4.500h12M2 7.500h12M2 15.500h12M2 18.500h12" stroke="#aaa" stroke-width="2"/><path d="M18 4l2.500 5L23 4zM18 19l2.500-5 2.500 5z" fill="#bbb"/></svg></button>
      </div>
    </div>

    <div class="work">
      <div class="editor">
        <div class="infobar">
          <svg width="32" height="32" viewBox="0 0 32 32"><circle cx="16" cy="16" r="14.500" fill="url(#g-blue)" stroke="#336a96"/><circle cx="16" cy="7.500" r="2" fill="#fff"/><path d="M16 11.500v13" stroke="#fff" stroke-width="4"/></svg>
          <p>Your donations support our worldwide community.</p>
          <button class="donate">Donate</button>
          <button class="dismiss" aria-label="Close infobar"><svg width="18" height="18"><path d="M1 1l16 16M17 1L1 17" stroke="#0a4f90" stroke-width="2.200"/></svg></button>
          <svg class="pointer" width="20" height="28" viewBox="0 0 20 28"><path d="M1.500 1.500v20l5-4.500 3.500 7 4-2-3.500-6.500H17z" fill="#222" stroke="#fff" stroke-width="1.300"/></svg>
        </div>
        <div class="canvas">
          <div class="sheet-area">
            <svg class="tab-kind" width="8" height="7"><path d="M1 0v5h6" fill="none" stroke="#999" stroke-width="2"/></svg>
            <svg class="ruler" width="796" height="20" viewBox="-1 0 796 20" aria-label="Ruler">
              <path d="M76 4h643v15H76z" fill="#fff"/>
              <path d="M76 4.500H.5v14H76M719 4.500h74.500v14H719" fill="none" stroke="#b5b5b5"/>
              <path d="M19.500 9v3M57.500 9v3M95.500 9v3M133.500 9v3M171.500 9v3M209.500 9v3M247.500 9v3M284.500 9v3M322.500 9v3M360.500 9v3M398.500 9v3M436.500 9v3M474.500 9v3M511.500 9v3M549.500 9v3M587.500 9v3M625.500 9v3M663.500 9v3M700.500 9v3M738.500 9v3M776.500 9v3" stroke="#aaa"/>
              <path d="M114 4.500h1m37 0h1m37 0h1m37 0h1m37 0h1m36 0h1m37 0h1m37 0h1m37 0h1m37 0h1m36 0h1m37 0h1m37 0h1m37 0h1m37 0h1m36 0h1" stroke="#999"/>
              <path d="M121 19.500h5M169 19.500h5M216 19.500h5M263 19.500h5M310 19.500h5M358 19.500h5M405 19.500h5M452 19.500h5M499 19.500h5M547 19.500h5M594 19.500h5M641 19.500h5M688 19.500h5M123.500 16v3M171.500 16v3M218.500 16v3M265.500 16v3M312.500 16v3M360.500 16v3M407.500 16v3M454.500 16v3M501.500 16v3M549.500 16v3M596.500 16v3M643.500 16v3M690.500 16v3" stroke="#888"/>
              <g class="nums" text-anchor="middle"><text x="38" y="14">1</text><text x="114" y="14">1</text><text x="152" y="14">2</text><text x="189" y="14">3</text><text x="227" y="14">4</text><text x="265" y="14">5</text><text x="303" y="14">6</text><text x="341" y="14">7</text><text x="378" y="14">8</text><text x="416" y="14">9</text><text x="454" y="14">10</text><text x="492" y="14">11</text><text x="530" y="14">12</text><text x="567" y="14">13</text><text x="605" y="14">14</text><text x="643" y="14">15</text><text x="681" y="14">16</text><text x="719" y="14">17</text><text x="756" y="14">18</text></g>
              <path d="M72.500 3.500h8v3l-4 4.500 4 5v3h-8v-3l4-5-4-4.500z" fill="#fff" stroke="#888"/>
              <path d="M715.500 19.500v-4l4-4.500 4 4.500v4z" fill="#fff" stroke="#888"/>
            </svg>
            <article class="page" contenteditable="true" aria-label="Document text"><i class="mark"></i><i class="mark right"></i></article>
          </div>
          <div class="scroll"><div class="thumb"></div></div>
        </div>
      </div>
      <aside class="sidebar">
        <button class="menu" aria-label="Sidebar settings"><svg width="12" height="12"><path d="M1 1.500h10M1 5.500h10M1 9.500h10" stroke="#222"/></svg></button>
        <button class="on" aria-label="Properties"><svg viewBox="0 0 24 24"><rect x="4" y="4" width="16" height="7" rx="3.500" fill="#e95420"/><rect x="4" y="13" width="16" height="7" rx="3.500" fill="#e95420"/><circle cx="16.500" cy="7.500" r="2.700" fill="#fff"/><circle cx="7.500" cy="16.500" r="2.700" fill="#fff"/></svg></button>
        <button aria-label="Styles"><svg><use href="#i-styleA"/></svg></button>
        <button aria-label="Gallery"><svg viewBox="0 0 24 24"><rect x="2.500" y="3.500" width="16" height="13" rx="1" fill="#d957cc" stroke="#4d4d4d"/><rect x="5.500" y="7.500" width="16" height="13" rx="1" fill="#d957cc" stroke="#222"/><path d="M9 18v-2l3-3 2 2 2-1 1 4z" fill="#fff"/><circle cx="17.500" cy="12" r="1.200" fill="#fff"/></svg></button>
        <button aria-label="Navigator"><svg viewBox="0 0 24 24"><circle cx="12" cy="12" r="9.500" fill="#4f7fec" stroke="#4d4d4d"/><path d="M7 16l2.500-5 3 3z M9.500 10.500l4-2 2 3-3 3.500z" fill="#eee"/><path d="M17 7.500l-5 1.500 3 3z" fill="#e23a4a"/></svg></button>
        <button aria-label="Page"><svg viewBox="0 0 24 24"><path d="M6 3.500h9l4.500 4.500v11q0 1.500-1.500 1.500H6q-1.500 0-1.500-1.500V5q0-1.500 1.500-1.500z" fill="#fff" stroke="#4d4d4d"/><path d="M15 3.500V8h4.500z" fill="#777"/></svg></button>
        <button aria-label="Style inspector"><svg viewBox="0 0 24 24"><use href="#i-styleA"/><circle cx="16" cy="16" r="4" fill="#fff" stroke="#666"/><path d="M19 19l3 3" stroke="#666" stroke-width="1.500"/></svg></button>
        <button class="handle" aria-label="Hide sidebar"><svg width="7" height="10"><path d="M1 1.500l5 3.500-5 3.500z" fill="#fff"/></svg></button>
      </aside>
    </div>

    <footer class="status">
      <span class="mid"><svg width="10" height="12" viewBox="0 0 10 12"><path d="M3.500 1h3v4h2.500l-4 4-4-4h2.500z" fill="#9acd32" stroke="#3f5a22"/><path d="M0 11h10" stroke="#444"/></svg></span>
      <span>Page 1 of 1</span><span>0 words, 0 characters</span><span>Default Page Style</span><span class="mid">English (Hong Kong)</span><span></span>
      <span class="mid"><svg width="18" height="12"><path d="M1 2.500h8v7H1z" fill="none" stroke="#e95420" stroke-width="1.500"/><path d="M12 1.500h5M12 10.500h5M14.500 2v8" stroke="#222" stroke-width="1.300"/></svg></span>
      <span></span><span></span>
      <span class="mid"><svg width="56" height="12" fill="none"><path d="M1.500 1.500h4l3 3v6h-7z" stroke="#555" stroke-width="1.300"/><path d="M16.500 1.500h3l3 2v7h-6zM26.500 1.500h3l3 2v7h-6zM48.500 1.500h-4l-3 2v7h7zM48.500 1.500h4l3 2v7h-7z" stroke="#aaa"/></svg></span>
      <span class="zoom"><button aria-label="Zoom out"><svg width="10" height="10"><path d="M1 5h8" stroke="#555" stroke-width="2"/></svg></button><input type="range" min="0" max="100" value="50" aria-label="Zoom"><button aria-label="Zoom in"><svg width="10" height="10"><path d="M1 5h8M5 1v8" stroke="#555" stroke-width="2"/></svg></button></span>
      <span>100%</span>
    </footer>
  </main>
</div>
</body>
</html>
```
FILE: styles.css
```css
* { box-sizing: border-box; }
body { margin: 0; font: 14px/20px "Noto Sans", "Open Sans", sans-serif; color: #3d3d3d; background: #fafafa; }
button { margin: 0; padding: 0; border: 0; background: none; font: inherit; color: inherit; }
svg { display: block; flex: none; }
.defs { position: absolute; }
.symbols { display: none; }
.glyph { font-family: "Noto Sans", sans-serif; font-weight: 700; fill: #333; }
.slant { font-style: italic; }
.mini { font-family: "Noto Sans", sans-serif; font-weight: 600; fill: #e95420; }

.desktop { display: grid; grid-template: 27px minmax(0, 1fr) / 70px minmax(0, 1fr); height: 100vh; overflow: hidden; }

.topbar { grid-column: 1 / -1; display: grid; grid-template-columns: 1fr auto 1fr; align-items: center; padding: 0 18px; background: #131313; color: #eee; }
.top-left, .top-item { display: flex; align-items: center; }
.top-item.app { gap: 8px; margin-left: 40px; }
.top-item.clock { gap: 16px; padding-left: 104px; }
.top-item.tray { justify-self: end; gap: 12px; }

.dock { display: flex; flex-direction: column; align-items: center; gap: 4px; padding: 6px 3px; background: linear-gradient(165deg, #180c14 70%, #26121d); }
.dock-item { position: relative; display: flex; align-items: center; justify-content: center; width: 64px; height: 64px; flex: none; border-radius: 12px; }
.dock-item.active { background: #443b40; }
.dock-item.running::before { content: ""; position: absolute; left: 0; top: 29px; width: 6px; height: 6px; border-radius: 50%; background: #e95420; }
.dock-line { width: 48px; height: 1px; margin: -1px 0; border: 0; background: #ccc; flex: none; }
.apps { margin-top: auto; }
.c-writer { color: #1b7fc0; }
.c-calc { color: #2a9b1d; }
.c-impress { color: #cf5f28; }

.window { display: flex; flex-direction: column; min-width: 0; }
.titlebar { display: grid; grid-template-columns: 1fr auto 1fr; align-items: center; height: 37px; padding: 0 7px; background: #ebebeb; border-bottom: 1px solid #bfbfbf; }
.titlebar h1 { grid-column: 2; margin: 0; padding-top: 2px; font-size: 14px; line-height: 20px; font-weight: 700; }
.win-buttons { justify-self: end; display: flex; gap: 12px; }
.win-buttons button { width: 22px; height: 22px; border-radius: 50%; background: #dadada; }

.menubar { display: flex; height: 25px; padding-right: 11px; }
.menus { flex: 1; display: flex; gap: 2px; border-bottom: 1px solid #dadada; margin-right: 8px; }
.menus button { padding: 1px 8px 0; }
.menubar .doc-close { align-self: center; }

.toolbar { display: flex; align-items: center; height: 39px; }
.standard { padding-left: 2px; }
.formatting { padding-left: 4px; }
.group { display: flex; align-items: center; height: 33px; padding: 0 4px 0 3px; border-right: 1px solid #dadada; }
.group:last-child { border: 0; }
.group:first-child, .flush { padding-left: 0; }
.split { padding-left: 1px; }
.group button { display: flex; align-items: center; justify-content: center; width: 33px; height: 34px; color: #111; }
.group button:disabled { color: #b5b5b5; }
.group .arr { width: 11px; }
.group .arr:last-child { margin-right: 2px; }
.group .arr + .on { margin-left: 2px; }
.toolbar .group svg { width: 24px; height: 24px; }
.toolbar .group .arr svg { width: 8px; }
.flip { transform: scaleX(-1); }
.on, .group .on { background: #d5d5d5; border: 1px solid #bfbfbf; border-radius: 6px; }

.combo { display: flex; height: 34px; border: 1px solid #c4c4c4; border-radius: 6px; background: #fff; overflow: hidden; flex: none; }
.combo input { flex: 1; min-width: 0; margin: 0; padding: 0 0 0 8px; border: 0; background: none; font: inherit; color: #000; outline: none; }
.combo button { width: 35px; display: grid; place-items: center; border-left: 1px solid #c4c4c4; }
.combo .slot { width: 8px; border-left: 1px solid #d5d5d5; }
.style-box { width: 202px; }
.font-box { width: 221px; margin-left: 3px; }
.size-box { width: 101px; margin: 0 4px 0 8px; }
.lead { border-left: 1px solid #dadada; }

.work { flex: 1; min-height: 0; display: flex; }
.editor { flex: 1; min-width: 0; display: flex; flex-direction: column; }
.infobar { position: relative; display: flex; align-items: center; height: 40px; flex: none; padding: 0 6px 0 3px; background: #bce5f7; border: solid #c0c4c6; border-width: 1px 0; color: #111; }
.infobar p { flex: 1; margin: 0 0 0 6px; }
.donate { width: 83px; height: 34px; margin-right: 6px; border: 1px solid #c8cdd0; border-radius: 6px; background: #fff; color: #3d3d3d; }
.pointer { position: absolute; right: -6px; top: 22px; z-index: 2; }

.canvas { flex: 1; min-height: 0; display: flex; border-right: 1px solid #bfbfbf; }
.sheet-area { flex: 1; min-width: 0; display: grid; grid-template: 41px minmax(0, 1fr) / 1fr 796px 1fr; overflow: hidden; }
.tab-kind { margin: 9px 0 0 8px; }
.ruler { grid-column: 2; }
.nums { font: 10px "Noto Sans", sans-serif; fill: #a5a5a5; }
.page { grid-column: 2; position: relative; background: #fff; border: 1px solid #999; border-bottom: 0; box-shadow: 0 0 5px #c8c8c8; outline: none; }
.mark { position: absolute; top: 63px; left: 63px; width: 14px; height: 15px; border: solid #cfcfcf; border-width: 0 1px 2px 0; }
.mark.right { left: auto; right: 61px; border-width: 0 0 2px 1px; }
.scroll { width: 13px; padding-left: 4px; }
.thumb { width: 6px; height: 71%; background: #888; border-radius: 0 0 3px 3px; }

.sidebar { position: relative; width: 58px; padding-right: 10px; display: flex; flex-direction: column; align-items: flex-end; gap: 8px; }
.sidebar button { display: grid; place-items: center; width: 37px; height: 34px; flex: none; }
.sidebar button svg { width: 24px; height: 24px; }
.sidebar .menu { height: 39px; }
.sidebar .menu svg { width: 12px; height: 12px; }
.sidebar .handle { position: absolute; left: -1px; top: 409px; width: 7px; height: 73px; background: #999; }
.sidebar .handle svg { width: 7px; height: 10px; }

.status { display: grid; grid-template-columns: 33px 261fr 326fr 311fr 308fr 68px 29px 29px 218fr 76px 143px 48px; align-items: center; height: 21px; padding-top: 2px; border-top: 1px solid #bfbfbf; font-size: 12px; line-height: 14px; }
.status > span { height: 14px; padding-left: 8px; border-right: 1px solid #dadada; white-space: nowrap; }
.status > span:nth-child(2) { padding-left: 6px; }
.status > span:last-child { border: 0; }
.status > .mid { display: flex; align-items: center; justify-content: center; padding: 0; }
.status .zoom { display: flex; align-items: center; gap: 5px; }
.zoom input { flex: 1; min-width: 0; height: 12px; margin: 0; appearance: none; background: linear-gradient(#999, #999) center / 100% 2px no-repeat; }
.zoom button:last-child { margin-right: 6px; }
.zoom input::-webkit-slider-thumb { appearance: none; width: 9px; height: 9px; border: 1px solid #555; border-radius: 50%; background: #fff; }
```
